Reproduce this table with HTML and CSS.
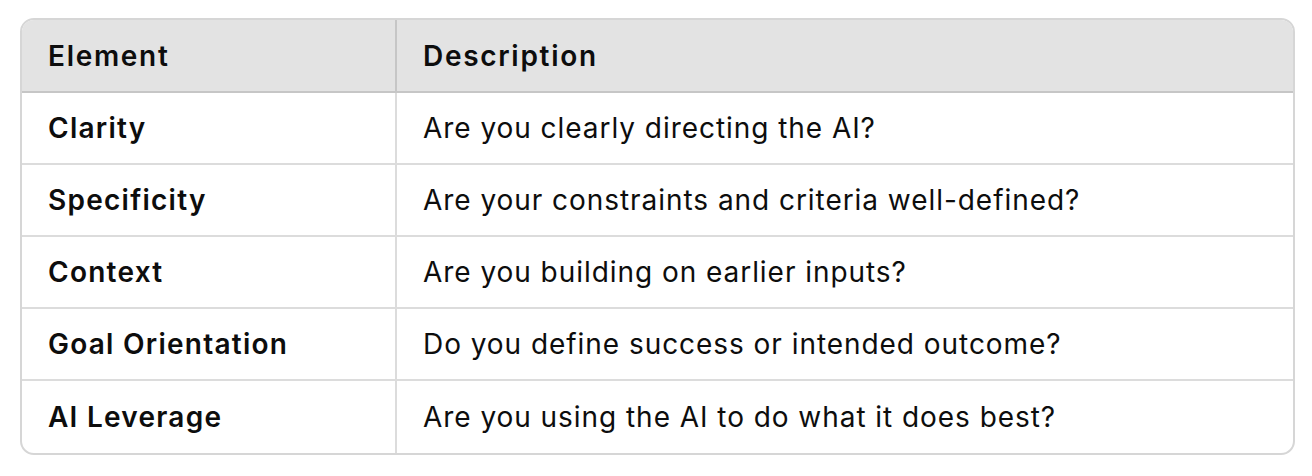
FILE: index.html
```html
<!DOCTYPE html>
<html>
<head>
<meta charset="utf-8">
<link rel="stylesheet" href="styles.css">
</head>
<body>
<div class="wrap">
  <table class="grid">
    <thead>
      <tr><th class="c1">Element</th><th>Description</th></tr>
    </thead>
    <tbody>
      <tr><td class="c1">Clarity</td><td>Are you clearly directing the AI?</td></tr>
      <tr><td class="c1">Specificity</td><td>Are your constraints and criteria well-defined?</td></tr>
      <tr><td class="c1">Context</td><td>Are you building on earlier inputs?</td></tr>
      <tr><td class="c1">Goal Orientation</td><td>Do you define success or intended outcome?</td></tr>
      <tr><td class="c1">AI Leverage</td><td>Are you using the AI to do what it does best?</td></tr>
    </tbody>
  </table>
</div>
</body>
</html>
```
FILE: styles.css
```css
html, body {
  margin: 0;
  padding: 0;
  background: #ffffff;
}
body {
  font-family: Inter, "Noto Sans", sans-serif;
  color: #0d0d0d;
}
.wrap {
  padding: 18px 18px 0 20px;
}
.grid {
  width: 1275px;
  border-collapse: separate;
  border-spacing: 0;
  border: 2px solid #d6d6d6;
  border-radius: 14px;
  overflow: hidden;
  font-size: 28px;
}
.grid th, .grid td {
  text-align: left;
  padding: 0 26px;
  height: 72px;
  box-sizing: border-box;
  vertical-align: middle;
}
.grid th {
  background: #e3e3e3;
  font-weight: 600;
  letter-spacing: 1.7px;
  height: 73px;
  border-bottom: 2px solid #c6c6c6;
}
.grid th.c1 {
  border-right: 2px solid #c6c6c6;
}
.grid td {
  font-weight: 400;
  letter-spacing: 0.95px;
  border-bottom: 2px solid #dcdcdc;
}
.grid td.c1 {
  font-weight: 600;
  letter-spacing: 1.25px;
  width: 375px;
  border-right: 2px solid #dcdcdc;
}
.grid tbody tr:last-child td {
  border-bottom: none;
}
```
